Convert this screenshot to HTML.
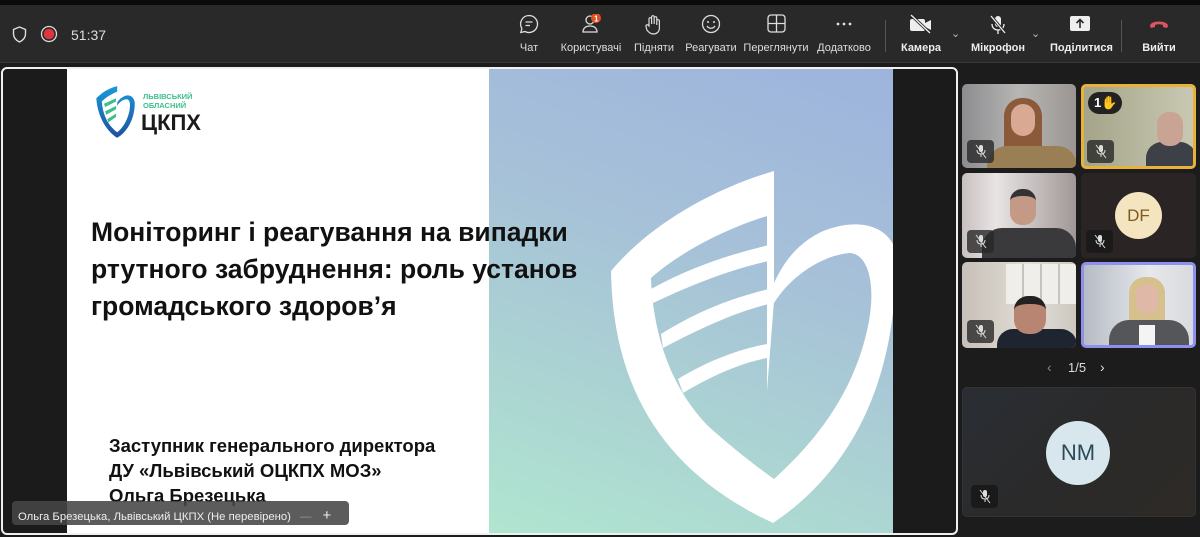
<!DOCTYPE html>
<html><head><meta charset="utf-8"><style>
*{margin:0;padding:0;box-sizing:border-box}
body{width:1200px;height:537px;background:#1c1c1c;font-family:"Liberation Sans",sans-serif;position:relative;overflow:hidden;color:#fff}
.top{position:absolute;left:0;top:0;width:1200px;height:5px;background:#0a0a0a}
.bar{position:absolute;left:0;top:5px;width:1200px;height:58px;background:#292929;border-bottom:1px solid #3a3a3a}
.btn{position:absolute;top:0;height:58px;text-align:center;font-size:11px;color:#ddd}
.btn svg{position:absolute;top:9px}
.btn span{position:absolute;top:37px;left:0;right:0;white-space:nowrap}
.frame{position:absolute;left:1px;top:67px;width:957px;height:468px;border:2px solid #f0f0f0;border-radius:6px;background:#1b1b1b;overflow:hidden}
.slide{position:absolute;left:64px;top:0;width:422px;height:464px;background:#fff;z-index:2}
.grad{position:absolute;left:486px;top:0;width:404px;height:464px;background:linear-gradient(200deg,#9db4dd 0%,#a6c1d8 40%,#acd6d2 75%,#b0e6d0 100%);z-index:1}
.t1{position:absolute;left:24px;top:145px;font-size:26.5px;font-weight:bold;color:#111;line-height:37px;white-space:nowrap}
.t2{position:absolute;left:42px;top:364px;font-size:18.5px;font-weight:bold;color:#111;line-height:25px;white-space:nowrap}
.name{position:absolute;left:9px;top:432px;width:337px;height:24px;background:rgba(70,70,70,.88);border-radius:4px;font-size:11.3px;color:#eee;padding:6px 0 0 6px;white-space:nowrap;z-index:3}
.tile{position:absolute;border-radius:5px;overflow:hidden}
.mic{position:absolute;left:5px;bottom:5px;width:27px;height:23px;background:rgba(40,40,40,.8);border-radius:4px}
.mic svg{position:absolute;left:7px;top:4px}
</style></head><body>
<div class="top"></div>
<div class="bar">
<svg style="position:absolute;left:12px;top:21px" width="15" height="17" viewBox="0 0 15 17"><path d="M7.5 1 L13.5 3.5 V8 C13.5 12 10.5 14.5 7.5 16 C4.5 14.5 1.5 12 1.5 8 V3.5 Z" fill="none" stroke="#ddd" stroke-width="1.4"/></svg>
<svg style="position:absolute;left:40px;top:20px" width="18" height="18"><circle cx="9" cy="9" r="7.5" fill="none" stroke="#ddd" stroke-width="1.3"/><circle cx="9" cy="9" r="5.3" fill="#e0353f"/></svg>
<div style="position:absolute;left:71px;top:22px;font-size:14px;color:#ddd">51:37</div>
<div class="btn" style="left:509px;width:40px"><svg style="left:10px" width="20" height="20" viewBox="0 0 20 20"><path d="M10 1.5a8.5 8.5 0 1 1-4 16L1.8 18.5l1.1-4A8.5 8.5 0 0 1 10 1.5z" fill="none" stroke="#ddd" stroke-width="1.3"/><path d="M6.5 8h7M6.5 11.5h4.5" stroke="#ddd" stroke-width="1.3"/></svg><span>Чат</span></div>
<div class="btn" style="left:558px;width:66px"><svg style="left:23px" width="22" height="20" viewBox="0 0 22 20"><circle cx="9" cy="6" r="4" fill="none" stroke="#ddd" stroke-width="1.3"/><path d="M2 18c0-4 3-6 7-6s7 2 7 6z" fill="none" stroke="#ddd" stroke-width="1.3"/><circle cx="15" cy="4" r="5" fill="#e0501e"/><text x="13" y="7.5" font-size="8" fill="#fff" font-weight="bold" font-family="Liberation Sans">1</text></svg><span>Користувачі</span></div>
<div class="btn" style="left:630px;width:48px"><svg style="left:14px" width="20" height="22" viewBox="0 0 20 22"><path d="M5 12V5a1.3 1.3 0 0 1 2.6 0V10V3a1.3 1.3 0 0 1 2.6 0V10V4a1.3 1.3 0 0 1 2.6 0V11V7a1.3 1.3 0 0 1 2.6 0V14c0 4-3 6-6 6s-5-2-6.5-4L2 12.5a1.3 1.3 0 0 1 2-1.5L5 12z" fill="none" stroke="#ddd" stroke-width="1.2"/></svg><span>Підняти</span></div>
<div class="btn" style="left:684px;width:54px"><svg style="left:17px" width="20" height="20"><circle cx="10" cy="10" r="8.5" fill="none" stroke="#ddd" stroke-width="1.3"/><circle cx="7" cy="8" r="1" fill="#ddd"/><circle cx="13" cy="8" r="1" fill="#ddd"/><path d="M6 12c2 3 6 3 8 0" fill="none" stroke="#ddd" stroke-width="1.3"/></svg><span>Реагувати</span></div>
<div class="btn" style="left:743px;width:66px"><svg style="left:24px" width="19" height="19"><rect x="1" y="1" width="17" height="17" rx="3" fill="none" stroke="#ddd" stroke-width="1.3"/><path d="M9.5 1v17M1 9.5h17" stroke="#ddd" stroke-width="1.3"/></svg><span>Переглянути</span></div>
<div class="btn" style="left:814px;width:60px"><svg style="left:20px" width="20" height="20"><circle cx="4" cy="10" r="1.4" fill="#ddd"/><circle cx="10" cy="10" r="1.4" fill="#ddd"/><circle cx="16" cy="10" r="1.4" fill="#ddd"/></svg><span>Додатково</span></div>
<div style="position:absolute;left:885px;top:15px;width:1px;height:32px;background:#555"></div>
<div class="btn" style="left:898px;width:46px;font-weight:bold;color:#eee"><svg style="left:11px" width="24" height="20" viewBox="0 0 24 20"><rect x="1" y="5" width="15" height="12" rx="2" fill="#eee"/><path d="M16 9l6-3v10l-6-3z" fill="#eee"/><path d="M2 1l19 18" stroke="#292929" stroke-width="3"/><path d="M2 1l19 18" stroke="#eee" stroke-width="1.3"/></svg><span>Камера</span></div>
<div style="position:absolute;left:951px;top:22px;color:#bbb;font-size:11px">⌄</div>
<div class="btn" style="left:968px;width:60px;font-weight:bold;color:#eee"><svg style="left:20px" width="20" height="22" viewBox="0 0 20 22"><rect x="7" y="2" width="6" height="11" rx="3" fill="#eee"/><path d="M4 10c0 4 3 6 6 6s6-2 6-6M10 16v4" fill="none" stroke="#eee" stroke-width="1.3"/><path d="M3 2l14 17" stroke="#292929" stroke-width="3"/><path d="M3 2l14 17" stroke="#eee" stroke-width="1.3"/></svg><span>Мікрофон</span></div>
<div style="position:absolute;left:1031px;top:22px;color:#bbb;font-size:11px">⌄</div>
<div class="btn" style="left:1050px;width:60px;font-weight:bold;color:#eee"><svg style="left:20px" width="20" height="18"><rect x="0" y="2" width="20" height="15" rx="2" fill="#eee"/><path d="M10 14V6M6.5 9L10 5.5 13.5 9" fill="none" stroke="#292929" stroke-width="1.6"/></svg><span>Поділитися</span></div>
<div style="position:absolute;left:1121px;top:15px;width:1px;height:32px;background:#555"></div>
<div class="btn" style="left:1138px;width:42px;font-weight:bold;color:#eee"><svg style="left:10px" width="22" height="18"><path d="M2 12c0-6 18-6 18 0l-1 2-4-1v-2c-3-1-5-1-8 0v2l-4 1z" fill="#e0535f"/></svg><span>Вийти</span></div>
</div>

<div class="frame">
<div class="slide">
<svg style="position:absolute;left:26px;top:16px" width="120" height="54" viewBox="0 0 120 54">
<defs><linearGradient id="lg" x1="0" y1="0" x2="0" y2="1"><stop offset="0" stop-color="#1a9ad8"/><stop offset="1" stop-color="#1f4fa3"/></linearGradient></defs>
<g transform="scale(1.1)">
<path d="M22 1 C14 3 8 7 3 12 C4 28 12 42 22 48 C32 42 38 30 38 16 C37 9 31 8 27 11 C25 12 23 14 22 16 Z M22 6 V19 C24 15 28 13 31 13 C34 14 34 18 33 24 C31 33 27 39 22 43 C14 37 9 28 8 15 C12 11 17 8 22 6Z" fill="url(#lg)" fill-rule="evenodd"/>
<path d="M10 17 L21 12 V15 L11 20Z M11 24 L21 19 V22 L12 27Z M13 31 L21 26 V29 L14 34Z" fill="#3cc08a"/>
</g>
<text x="50" y="14" font-size="7.5" font-weight="bold" fill="#3cc08a" font-family="Liberation Sans">ЛЬВІВСЬКИЙ</text>
<text x="50" y="23" font-size="7.5" font-weight="bold" fill="#3cc08a" font-family="Liberation Sans">ОБЛАСНИЙ</text>
<text x="48" y="45" font-size="22" font-weight="bold" fill="#1b1b1b" font-family="Liberation Sans">ЦКПХ</text>
</svg>
<div class="t1">Моніторинг і реагування на випадки<br>ртутного забруднення: роль установ<br>громадського здоров’я</div>
<div class="t2">Заступник генерального директора<br>ДУ «Львівський ОЦКПХ МОЗ»<br>Ольга Брезецька</div>
</div>
<div class="grad">
<svg width="404" height="464" viewBox="488 68 404 464">
<path fill="#fff" fill-rule="evenodd" d="M773,170 C705,190 645,228 610,270 C612,385 660,470 772,522 C850,470 897,380 895,250 C885,220 850,218 820,231 C800,241 785,256 773,282 Z M773,213 C730,225 680,250 650,277 C652,330 668,385 707,425 C735,450 755,465 773,478 C815,440 855,390 868,320 C875,280 866,252 848,252 C820,255 790,275 773,302 Z"/>
<path fill="#fff" d="M766,212 H773 V300 L766,390 Z"/>
<path fill="#fff" d="M650,288 C690,266 730,253 768,244 V260 C730,268 690,284 652,302Z M660,333 C700,308 735,296 768,288 V303 C735,311 700,327 662,347Z M677,378 C710,358 740,348 766,343 V357 C740,362 712,374 682,392Z"/>
</svg>
</div>
<div class="name">Ольга Брезецька, Львівський ЦКПХ (Не перевірено) <span style="color:#999;margin-left:6px">—</span> <span style="margin-left:8px;font-size:15px">+</span></div>
</div>

<svg width="0" height="0" style="position:absolute"><defs><g id="m"><rect x="5" y="1" width="4" height="7" rx="2" fill="#ddd"/><path d="M3 6c0 3 2 4 4 4s4-1 4-4M7 10v3" fill="none" stroke="#ddd" stroke-width="1"/><path d="M2 1l10 13" stroke="#ddd" stroke-width="1"/></g></defs></svg>

<div class="tile" style="left:962px;top:84px;width:114px;height:84px;background:linear-gradient(90deg,#8c8c90,#b8b6b4 50%,#9a9592)">
<div style="position:absolute;left:42px;top:14px;width:38px;height:70px;background:#8a5a3a;border-radius:18px 18px 4px 4px"></div>
<div style="position:absolute;left:49px;top:20px;width:24px;height:32px;background:#d9a994;border-radius:12px"></div>
<div style="position:absolute;left:25px;top:62px;width:90px;height:24px;background:#9a7f54;border-radius:20px 20px 0 0"></div>
<div class="mic"><svg width="14" height="15"><use href="#m"/></svg></div></div>

<div class="tile" style="left:1081px;top:84px;width:115px;height:85px;border:3px solid #e8b23a;background:linear-gradient(90deg,#a4a48a,#c9c8b2)">
<div style="position:absolute;left:62px;top:55px;width:50px;height:30px;background:#3d4046;border-radius:16px 16px 0 0"></div>
<div style="position:absolute;left:73px;top:25px;width:26px;height:34px;background:#c9a393;border-radius:12px"></div>
<div style="position:absolute;left:4px;top:5px;width:34px;height:22px;background:#222;border-radius:11px;font-size:13px;font-weight:bold;padding:3px 0 0 6px">1<span style="color:#f5b82e">✋</span></div>
<div class="mic" style="left:3px;bottom:3px"><svg width="14" height="15"><use href="#m"/></svg></div></div>

<div class="tile" style="left:962px;top:173px;width:114px;height:85px;background:linear-gradient(90deg,#c8c0bf,#e8e4e4 30%,#a09896)">
<div style="position:absolute;left:20px;top:55px;width:94px;height:30px;background:#3a3a3c;border-radius:20px 20px 0 0"></div>
<div style="position:absolute;left:48px;top:16px;width:26px;height:36px;background:#c49986;border-radius:12px;border-top:7px solid #333"></div>
<div class="mic"><svg width="14" height="15"><use href="#m"/></svg></div></div>

<div class="tile" style="left:1081px;top:173px;width:115px;height:85px;background:#2b2424">
<div style="position:absolute;left:34px;top:19px;width:47px;height:47px;border-radius:50%;background:#f4e4c0;color:#7a5a1f;font-size:17px;text-align:center;line-height:47px">DF</div>
<div class="mic" style="background:#1a1a1a"><svg width="14" height="15"><use href="#m"/></svg></div></div>

<div class="tile" style="left:962px;top:262px;width:114px;height:86px;background:linear-gradient(90deg,#c6c0b8,#e2ddd6 60%,#ccc8c0)">
<div style="position:absolute;left:44px;top:2px;width:70px;height:40px;background:repeating-linear-gradient(90deg,#f0eeea 0 16px,#c8c4bc 16px 18px)"></div>
<div style="position:absolute;left:35px;top:67px;width:80px;height:20px;background:#1e2430;border-radius:16px 16px 0 0"></div>
<div style="position:absolute;left:52px;top:34px;width:32px;height:38px;background:#b78572;border-radius:14px;border-top:8px solid #222"></div>
<div class="mic"><svg width="14" height="15"><use href="#m"/></svg></div></div>

<div class="tile" style="left:1081px;top:262px;width:115px;height:86px;border:3px solid #8f8fee;background:linear-gradient(90deg,#b6bcc4,#e6e8ec 60%,#d8dadd)">
<div style="position:absolute;left:45px;top:12px;width:36px;height:60px;background:#d6c08e;border-radius:16px 16px 4px 4px"></div>
<div style="position:absolute;left:52px;top:20px;width:22px;height:28px;background:#e0b8a8;border-radius:10px"></div>
<div style="position:absolute;left:25px;top:55px;width:80px;height:30px;background:#55565a;border-radius:20px 20px 0 0"></div>
<div style="position:absolute;left:55px;top:60px;width:16px;height:25px;background:#f4f4f4"></div></div>

<div style="position:absolute;left:1047px;top:359px;color:#888;font-size:14px">‹</div>
<div style="position:absolute;left:1068px;top:360px;color:#ddd;font-size:13px">1/5</div>
<div style="position:absolute;left:1100px;top:359px;color:#ddd;font-size:14px">›</div>

<div class="tile" style="left:962px;top:387px;width:234px;height:130px;background:linear-gradient(135deg,#2a2e34,#2a2a2a 50%,#2e2a26);border:1px solid #333">
<div style="position:absolute;left:83px;top:33px;width:64px;height:64px;border-radius:50%;background:#d8e6ed;color:#2a4a58;font-size:22px;text-align:center;line-height:64px">NM</div>
<div class="mic" style="background:#1a1a1a;left:8px;bottom:8px"><svg width="14" height="15"><use href="#m"/></svg></div></div>
</body></html>
